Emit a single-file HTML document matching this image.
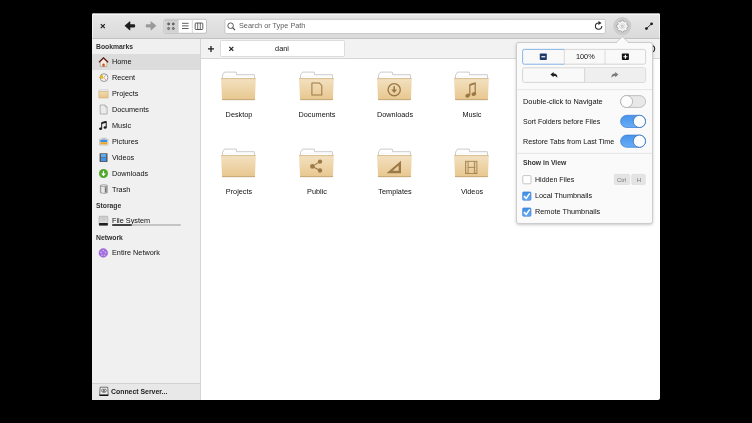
<!DOCTYPE html>
<html><head><meta charset="utf-8">
<style>
*{margin:0;padding:0;box-sizing:border-box}
html,body{width:752px;height:423px;background:#000;overflow:hidden;font-family:"Liberation Sans",sans-serif;color:#333}
.a{position:absolute}
#win{position:absolute;left:92px;top:13px;width:568px;height:387px;background:#fff;border-radius:3px 3px 2px 2px;overflow:hidden}
#hb{left:0;top:0;width:568px;height:26px;background:linear-gradient(#e8e8e8,#dadada);border-bottom:1px solid #c2c2c2;box-shadow:inset 0 1px 0 #a4a4a4,inset 0 2px 0 #f9f9f9,inset 1px 0 0 #f0f0f0,inset -1px 0 0 #f0f0f0}
#side{left:0;top:26px;width:109px;height:361px;background:#f0f0f0;border-right:1px solid #d4d4d4}
#tabs{left:109px;top:26px;width:459px;height:20px;background:#f2f2f2;border-bottom:1px solid #d6d6d6}
.t{will-change:transform;position:absolute;font-size:7.3px;line-height:8px;white-space:nowrap;color:#111}
.h{font-weight:bold;color:#333;font-size:6.8px}
.lbl{will-change:transform;position:absolute;font-size:7.3px;line-height:8px;width:70px;text-align:center;color:#111}
svg{position:absolute;overflow:visible}
</style></head><body>
<svg width="0" height="0" style="position:absolute">
<defs>
<linearGradient id="fg" x1="0" y1="0" x2="0" y2="1">
<stop offset="0" stop-color="#f3e1c1"/><stop offset="1" stop-color="#e8c78f"/>
</linearGradient>
<symbol id="folder" viewBox="0 0 46 36">
<path d="M6.5,10.8 L6.5,7.2 L8.5,4.1 L20.2,4.1 L20.6,6.7 L38.3,6.7 L38.6,10.8 Z" fill="#fff" stroke="#bababa" stroke-width="0.75" stroke-linejoin="miter"/>
<path d="M7.5,8.2 L37.6,8.2" stroke="#f2f2f2" stroke-width="0.6"/>
<path d="M5,10.3 L39.8,10.3 L38.9,31.9 L6.1,31.9 Z" fill="url(#fg)"/>
<path d="M5.1,10.6 L39.7,10.6" stroke="#d2b07a" stroke-width="0.7"/>
<path d="M6.1,31.5 L38.9,31.5" stroke="#c4a066" stroke-width="0.9"/>
<path d="M6.8,32.3 L38.2,32.3" stroke="#e6e0d6" stroke-width="0.6"/>
</symbol>
</defs>
</svg>

<div id="win">
  <div id="hb" class="a"></div>
  <div id="side" class="a"></div>
  <div id="tabs" class="a"></div>
</div>

<!-- headerbar -->
<svg style="left:0;top:0" width="752" height="423">
  <!-- close x -->
  <path d="M100.8,24.2 L104.8,28.2 M104.8,24.2 L100.8,28.2" stroke="#222" stroke-width="1.2"/>
  <!-- back arrow -->
  <path d="M124.5,25.8 L129.6,21.4 Q130.3,21 130.3,21.9 L130.3,24.2 L134.3,24.2 Q135.2,24.2 135.2,25.8 Q135.2,27.4 134.3,27.4 L130.3,27.4 L130.3,29.7 Q130.3,30.6 129.6,30.2 Z" fill="#1e1e1e"/>
  <!-- forward arrow -->
  <path d="M156.4,25.8 L151.3,21.4 Q150.6,21 150.6,21.9 L150.6,24.2 L146.6,24.2 Q145.7,24.2 145.7,25.8 Q145.7,27.4 146.6,27.4 L150.6,27.4 L150.6,29.7 Q150.6,30.6 151.3,30.2 Z" fill="#9a9a9a"/>
  <!-- view switcher -->
  <rect x="164" y="19.3" width="42.5" height="14" rx="1.5" fill="#fff" stroke="#b4b4b4" stroke-width="0.8"/>
  <rect x="164.4" y="19.7" width="13.8" height="13.2" fill="#d2d2d2"/>
  <path d="M165,20.3 H178" stroke="#c2c2c2" stroke-width="0.7"/>
  <path d="M178.2,19.5 V33.1 M192.3,19.5 V33.1" stroke="#cccccc" stroke-width="0.8"/>
  <circle cx="168.6" cy="23.9" r="1" fill="#777" stroke="#333" stroke-width="0.6"/>
  <circle cx="173.3" cy="23.9" r="1" fill="#777" stroke="#333" stroke-width="0.6"/>
  <circle cx="168.6" cy="28.5" r="1" fill="#999" stroke="#333" stroke-width="0.6"/>
  <circle cx="173.3" cy="28.5" r="1" fill="#999" stroke="#333" stroke-width="0.6"/>
  <path d="M182,23.3 H188.6 M182,25.9 H188.6 M182,28.5 H188.6" stroke="#333" stroke-width="0.8"/>
  <rect x="195.2" y="23" width="7.6" height="6.5" rx="0.8" fill="none" stroke="#333" stroke-width="0.8"/>
  <path d="M197.7,23 V29.5 M200.3,23 V29.5" stroke="#333" stroke-width="0.7"/>
  <!-- search -->
  <rect x="224.9" y="19.3" width="380.5" height="14.3" rx="1.5" fill="#fff" stroke="#bfbfbf" stroke-width="0.8"/>
  <circle cx="230.6" cy="25.7" r="2.8" fill="none" stroke="#444" stroke-width="0.9"/>
  <path d="M232.6,27.7 L235,30.1" stroke="#444" stroke-width="1.1"/>
  <!-- reload -->
  <path d="M598.6,22.9 A3.2,3.2 0 1 0 601.8,26.1" fill="none" stroke="#2a2a2a" stroke-width="1.05"/>
  <path d="M598.4,20.9 L601.6,22.9 L598.4,24.9 Z" fill="#2a2a2a"/>
  <!-- gear button -->
  <circle cx="622.3" cy="26.1" r="8.6" fill="#cdcdcd" stroke="#c2c2c2" stroke-width="0.6"/>
  <path d="M627.16,25.06 L628.33,25.26 L628.33,27.14 L627.16,27.34 L626.58,28.76 L627.25,29.73 L625.93,31.05 L624.96,30.38 L623.54,30.96 L623.34,32.13 L621.46,32.13 L621.26,30.96 L619.84,30.38 L618.87,31.05 L617.55,29.73 L618.22,28.76 L617.64,27.34 L616.47,27.14 L616.47,25.26 L617.64,25.06 L618.22,23.64 L617.55,22.67 L618.87,21.35 L619.84,22.02 L621.26,21.44 L621.46,20.27 L623.34,20.27 L623.54,21.44 L624.96,22.02 L625.93,21.35 L627.25,22.67 L626.58,23.64 Z" fill="#f6f6f6" stroke="#8c8c8c" stroke-width="0.6" stroke-linejoin="miter"/>
  <circle cx="622.4" cy="26.2" r="2.7" fill="none" stroke="#cfcfcf" stroke-width="0.6"/>
  <ellipse cx="622.4" cy="26.3" rx="0.9" ry="1.3" fill="none" stroke="#8f8f8f" stroke-width="0.6"/>
  <!-- expand -->
  <path d="M646.6,28.4 L651.4,24" stroke="#222" stroke-width="0.9"/>
  <circle cx="646.4" cy="28.6" r="1.4" fill="#1a1a1a"/>
  <circle cx="651.6" cy="23.8" r="1.4" fill="#1a1a1a"/>
</svg>

<div class="t" style="left:238.5px;top:22.4px;color:#606060">Search or Type Path</div>
<!-- tab bar -->
<div class="a" style="left:220.3px;top:39.8px;width:124.7px;height:17.6px;background:#fff;border:1px solid #dcdcdc;border-radius:1.5px"></div>
<svg style="left:0;top:0" width="752" height="423">
  <path d="M208,48.9 H214 M211,45.9 V51.9" stroke="#1e1e1e" stroke-width="1.3"/>
  <path d="M229.3,46.9 L233.3,50.9 M233.3,46.9 L229.3,50.9" stroke="#222" stroke-width="1.2"/>
</svg>
<div class="t" style="left:262px;top:45px;width:40px;text-align:center">dani</div>

<!-- sidebar text (page coords) -->
<div class="a" style="left:92px;top:54px;width:108px;height:16px;background:#dcdcdc"></div>
<div class="t h" style="left:96px;top:42.5px">Bookmarks</div>
<div class="t" style="left:112px;top:58px">Home</div>
<div class="t" style="left:112px;top:74px">Recent</div>
<div class="t" style="left:112px;top:90px">Projects</div>
<div class="t" style="left:112px;top:106px">Documents</div>
<div class="t" style="left:112px;top:122px">Music</div>
<div class="t" style="left:112px;top:138px">Pictures</div>
<div class="t" style="left:112px;top:154px">Videos</div>
<div class="t" style="left:112px;top:170px">Downloads</div>
<div class="t" style="left:112px;top:186px">Trash</div>
<div class="t h" style="left:96px;top:202px">Storage</div>
<div class="t" style="left:112px;top:217px">File System</div>
<div class="a" style="left:111.5px;top:224.2px;width:69.5px;height:1.4px;background:#c4c4c4;border-radius:1px"></div>
<div class="a" style="left:111.5px;top:224.2px;width:20px;height:1.4px;background:#444;border-radius:1px"></div>
<div class="t h" style="left:96px;top:234px">Network</div>
<div class="t" style="left:112px;top:249.3px">Entire Network</div>

<!-- sidebar bottom -->
<div class="a" style="left:92px;top:383px;width:108px;height:17px;background:#e8e8e8;border-top:1px solid #d2d2d2"></div>
<div class="t" style="left:110.5px;top:388px;color:#222;font-size:6.9px;font-weight:bold">Connect Server...</div>

<!-- folders -->
<svg style="left:216px;top:68px" width="46" height="36"><use href="#folder"/></svg>
<svg style="left:294px;top:68px" width="46" height="36"><use href="#folder"/></svg>
<svg style="left:372px;top:68px" width="46" height="36"><use href="#folder"/></svg>
<svg style="left:449px;top:68px" width="46" height="36"><use href="#folder"/></svg>
<svg style="left:216px;top:145px" width="46" height="36"><use href="#folder"/></svg>
<svg style="left:294px;top:145px" width="46" height="36"><use href="#folder"/></svg>
<svg style="left:372px;top:145px" width="46" height="36"><use href="#folder"/></svg>
<svg style="left:449px;top:145px" width="46" height="36"><use href="#folder"/></svg>

<!-- sidebar icons -->
<svg style="left:0;top:0" width="752" height="423">
  <!-- home -->
  <path d="M100.3,61.8 L100.3,66.6 L106.8,66.6 L106.8,61.8 L103.55,58.8 Z" fill="#f6ece2" stroke="#a77d66" stroke-width="0.5"/>
  <path d="M105.6,57.9 H106.6 V60.6 H105.6 Z" fill="#e9d9c4"/>
  <path d="M99,62.3 L103.5,57.9 L108.1,62.3" fill="none" stroke="#5a1818" stroke-width="1.25" stroke-linejoin="miter"/>
  <path d="M102.4,66.6 V64.6 A1.15,1.15 0 0 1 104.7,64.6 V66.6 Z" fill="#c2571f"/>
  <!-- recent -->
  <circle cx="104" cy="77.6" r="3.9" fill="#f8f8f8" stroke="#7c7c7c" stroke-width="0.8"/>
  <path d="M104,77.6 L105.9,80" stroke="#d04040" stroke-width="0.45"/>
  <path d="M104,77.6 L105.5,75.2" stroke="#555" stroke-width="0.45"/>
  <path d="M98.9,77.4 L102.6,74.3 L103.4,79.2 Z" fill="#e9b81c"/>
  <!-- projects folder -->
  <rect x="99" y="89.6" width="9" height="2" fill="#e6e6ea" stroke="#c8c8c8" stroke-width="0.4"/>
  <rect x="98.9" y="91.3" width="9.2" height="6.7" fill="url(#pf)" stroke="#c9a873" stroke-width="0.5"/>
  <defs><linearGradient id="pf" x1="0" y1="0" x2="0" y2="1"><stop offset="0" stop-color="#f2dcae"/><stop offset="1" stop-color="#e5c388"/></linearGradient></defs>
  <!-- documents -->
  <path d="M100.2,105 L105.1,105 L107.1,107.1 L107.1,114 L100.2,114 Z" fill="#ebebeb" stroke="#8c8c8c" stroke-width="0.6"/>
  <path d="M105.1,105 V107.1 H107.1" fill="none" stroke="#9a9a9a" stroke-width="0.5"/>
  <!-- music -->
  <path d="M101.7,128.6 V122.5 L106.2,121.4 V127.4" fill="none" stroke="#1a1a1a" stroke-width="1"/>
  <ellipse cx="100.6" cy="128.7" rx="1.5" ry="1.2" fill="#1a1a1a"/>
  <ellipse cx="105.1" cy="127.5" rx="1.5" ry="1.2" fill="#1a1a1a"/>
  <path d="M101.7,123.3 L106.2,122.2" stroke="#1a1a1a" stroke-width="1.3"/>
  <!-- pictures -->
  <rect x="99.5" y="139" width="8.5" height="6.1" rx="0.5" fill="#f0f0f0" stroke="#a0a0a0" stroke-width="0.5"/>
  <rect x="100.3" y="139.7" width="6.9" height="2.6" fill="#3d8fe0"/>
  <rect x="100.3" y="142.3" width="6.9" height="2.1" fill="#f2a51c"/>
  <path d="M102.2,137.6 L103.8,139 L105.4,137.6" fill="none" stroke="#777" stroke-width="0.5"/>
  <!-- videos -->
  <rect x="99.6" y="153.2" width="7.9" height="8.8" rx="0.4" fill="#5e4f47"/>
  <rect x="100.9" y="153.9" width="5.3" height="3.5" fill="#58acf4"/>
  <rect x="100.9" y="157.8" width="5.3" height="3.5" fill="#3f95ea"/>
  <!-- downloads -->
  <circle cx="103.5" cy="173.5" r="4.5" fill="#4fa82a"/>
  <path d="M103.5,170.9 V175.4" stroke="#fff" stroke-width="1.2"/>
  <path d="M101.1,173.6 L103.5,176.3 L105.9,173.6 Z" fill="#fff"/>
  <!-- trash -->
  <defs><linearGradient id="tg" x1="0" y1="0" x2="1" y2="0"><stop offset="0" stop-color="#bdbdbd"/><stop offset="0.35" stop-color="#f4f4f4"/><stop offset="1" stop-color="#9a9a9a"/></linearGradient></defs>
  <path d="M100.4,185.6 H107.2 V192.8 Q103.8,194 100.4,192.8 Z" fill="url(#tg)" stroke="#6e6e6e" stroke-width="0.55"/>
  <ellipse cx="103.8" cy="185.6" rx="3.4" ry="0.9" fill="#e6e6e6" stroke="#6e6e6e" stroke-width="0.5"/>
  <path d="M105.6,187.4 V192" stroke="#666" stroke-width="0.9"/>
  <!-- file system -->
  <defs><linearGradient id="fsg" x1="0" y1="0" x2="0" y2="1"><stop offset="0" stop-color="#c8c8c8"/><stop offset="1" stop-color="#e8e8e8"/></linearGradient></defs>
  <rect x="99" y="216.2" width="8.8" height="9.3" rx="0.9" fill="url(#fsg)" stroke="#9c9c9c" stroke-width="0.5"/>
  <rect x="99" y="222.9" width="8.8" height="2.6" rx="0.6" fill="#1e1e1e"/>
  <path d="M101.8,220.6 Q103.4,218.2 105.2,220" fill="none" stroke="#a8a8a8" stroke-width="0.5"/>
  <!-- entire network -->
  <circle cx="103.3" cy="252.9" r="4.4" fill="#a26ddf" stroke="#8a55c8" stroke-width="0.4"/>
  <g fill="#e8d8fa"><circle cx="103.3" cy="250.4" r="0.55"/><circle cx="101" cy="252.4" r="0.55"/><circle cx="105.6" cy="252.4" r="0.55"/><circle cx="102" cy="255.2" r="0.55"/><circle cx="104.7" cy="255.2" r="0.55"/></g>
  <path d="M103.3,250.4 L101,252.4 L102,255.2 L104.7,255.2 L105.6,252.4 Z" fill="none" stroke="#c9a8f0" stroke-width="0.35"/>
  <!-- connect server -->
  <path d="M100.2,387.2 H107.7 L108.2,395.3 H99.6 Z" fill="#f0f0f0" stroke="#3c3c3c" stroke-width="0.7" stroke-linejoin="round"/>
  <rect x="99.5" y="394.4" width="8.8" height="1.5" rx="0.4" fill="#111"/>
  <circle cx="102.9" cy="390.6" r="1.5" fill="none" stroke="#444" stroke-width="0.6"/>
  <circle cx="104.9" cy="390.6" r="1.5" fill="none" stroke="#444" stroke-width="0.6"/>
  <circle cx="103.9" cy="391.6" r="1.2" fill="none" stroke="#666" stroke-width="0.5"/>
</svg>

<!-- folder emblems -->
<svg style="left:0;top:0" width="752" height="423">
<g fill="none" stroke="#9c7a47" stroke-linejoin="round">
  <path d="M311.9,82.9 L319.2,82.9 L321.8,85.5 L321.8,95 L311.9,95 Z" stroke-width="1.05"/>
  <circle cx="394.2" cy="89.7" r="6.1" stroke-width="1.4"/>
</g>
<g fill="#9c7a47">
  <path d="M393.4,86.3 H395 V89.6 H397.2 L394.2,93 L391.2,89.6 H393.4 Z"/>
  <g transform="translate(-1 0)">
  <path d="M470.2,84.2 Q473.5,82.6 476.8,82.2 L476.8,93.6 L475.6,93.6 L475.6,84.6 Q473.2,85 471.4,85.9 L471.4,95.4 L470.2,95.4 Z"/>
  <ellipse cx="468.7" cy="95.6" rx="2.4" ry="1.9" transform="rotate(-20 468.7 95.6)"/>
  <ellipse cx="474.9" cy="94" rx="2.4" ry="1.9" transform="rotate(-20 474.9 94)"/>
  </g>
  <circle cx="320" cy="161.6" r="2.2"/>
  <circle cx="312.4" cy="166.4" r="2.3"/>
  <circle cx="320" cy="170.5" r="2.2"/>
  <path d="M386.5,173.2 L401,160.8 L401,173.2 Z M392.6,170.8 L398.6,170.8 L398.6,165.6 Z" fill-rule="evenodd"/>
</g>
<path d="M320,161.6 L312.4,166.4 L320,170.5" fill="none" stroke="#9c7a47" stroke-width="1.1"/>
<g transform="translate(-1 0)">
<g fill="none" stroke="#a0804f" stroke-width="0.9">
  <rect x="466.6" y="161.3" width="11.3" height="12.3"/>
  <path d="M469.1,161.3 V173.6 M475.4,161.3 V173.6 M469.1,167.4 H475.4"/>
</g>
<g fill="#a0804f">
  <circle cx="467.8" cy="163" r="0.45"/><circle cx="467.8" cy="165.4" r="0.45"/><circle cx="467.8" cy="167.8" r="0.45"/><circle cx="467.8" cy="170.2" r="0.45"/><circle cx="467.8" cy="172.4" r="0.45"/>
  <circle cx="476.7" cy="163" r="0.45"/><circle cx="476.7" cy="165.4" r="0.45"/><circle cx="476.7" cy="167.8" r="0.45"/><circle cx="476.7" cy="170.2" r="0.45"/><circle cx="476.7" cy="172.4" r="0.45"/>
</g>
</g>
</svg>

<!-- tab bar right partial icon -->
<svg style="left:0;top:0" width="752" height="423">
  <path d="M652.6,45.4 A3.6,3.6 0 0 1 652.6,52" fill="none" stroke="#222" stroke-width="1.1"/>
</svg>
<!-- content labels -->
<div class="lbl" style="left:204px;top:110.5px">Desktop</div>
<div class="lbl" style="left:282px;top:110.5px">Documents</div>
<div class="lbl" style="left:360px;top:110.5px">Downloads</div>
<div class="lbl" style="left:437px;top:110.5px">Music</div>
<div class="lbl" style="left:204px;top:187.5px">Projects</div>
<div class="lbl" style="left:282px;top:187.5px">Public</div>
<div class="lbl" style="left:360px;top:187.5px">Templates</div>
<div class="lbl" style="left:437px;top:187.5px">Videos</div>

<!-- POPOVER -->
<div class="a" style="left:515.6px;top:42.3px;width:137px;height:182px;background:#fafafa;border:1px solid #cdcdcd;border-radius:3px;box-shadow:0 1px 3px rgba(0,0,0,.22)"></div>
<svg style="left:0;top:0" width="752" height="423">
  <path d="M615.6,43.6 L622.4,36.9 L629.2,43.6 Z" fill="#fafafa"/>
  <path d="M615.8,43 L622.4,36.6 L629,43" fill="none" stroke="#c4c4c4" stroke-width="0.8"/>
  <!-- zoom row -->
  <rect x="522.6" y="49.4" width="123" height="14.8" rx="1.8" fill="#f9f9f9" stroke="#cdcdcd" stroke-width="0.8"/>
  <path d="M605,49.6 V64" stroke="#d4d4d4" stroke-width="0.8"/>
  <path d="M564.3,49.4 H524.4 Q522.6,49.4 522.6,51.2 V62.4 Q522.6,64.2 524.4,64.2 H564.3" fill="#f9f9f9" stroke="#7fb1ea" stroke-width="0.9"/>
  <path d="M564.3,49.6 V64" stroke="#d0d0d0" stroke-width="0.8"/>
  <rect x="539.8" y="53.4" width="7" height="6.7" rx="0.8" fill="#1d3b66"/>
  <path d="M541.4,56.75 H545.2" stroke="#fff" stroke-width="1.2"/>
  <rect x="621.9" y="53.4" width="7" height="6.7" rx="0.8" fill="#111"/>
  <path d="M623.4,56.75 H627.4 M625.4,54.8 V58.7" stroke="#fff" stroke-width="1.2"/>
  <!-- undo row -->
  <rect x="522.6" y="67.8" width="123" height="14.6" rx="1.8" fill="#f9f9f9" stroke="#cdcdcd" stroke-width="0.8"/>
  <path d="M584.9,68.2 H643.8 Q645.2,68.2 645.2,69.6 V80.6 Q645.2,82 643.8,82 H584.9 Z" fill="#efefef"/>
  <path d="M584.6,68 V82.2" stroke="#cdcdcd" stroke-width="0.8"/>
  <path d="M550.4,74.6 L553.6,71.9 L553.6,73.6 Q557.4,73.6 557.4,77.8 Q556,75.8 553.6,75.8 L553.6,77.3 Z" fill="#1e1e1e"/>
  <path d="M618.4,74.6 L615.2,71.9 L615.2,73.6 Q611.4,73.6 611.4,77.8 Q612.8,75.8 615.2,75.8 L615.2,77.3 Z" fill="#7a7a7a"/>
  <!-- separators -->
  <path d="M516.5,89.6 H652" stroke="#e0e0e0" stroke-width="0.8"/>
  <path d="M516.5,153.4 H652" stroke="#e0e0e0" stroke-width="0.8"/>
  <!-- switches -->
  <rect x="620.6" y="95.6" width="25" height="11.8" rx="5.9" fill="#e8e8e8" stroke="#b4b4b4" stroke-width="0.8"/>
  <circle cx="626.6" cy="101.5" r="6" fill="#fdfdfd" stroke="#a8a8a8" stroke-width="0.8"/>
  <defs><linearGradient id="cb" x1="0" y1="0" x2="0" y2="1"><stop offset="0" stop-color="#3f8be6"/><stop offset="1" stop-color="#66abf6"/></linearGradient><linearGradient id="sw" x1="0" y1="0" x2="0" y2="1"><stop offset="0" stop-color="#4893ea"/><stop offset="1" stop-color="#68adf7"/></linearGradient></defs>
  <rect x="620.6" y="115.3" width="25" height="12.2" rx="6.1" fill="url(#sw)" stroke="#3a7bd0" stroke-width="0.7"/>
  <circle cx="639.4" cy="121.4" r="6.1" fill="#fdfdfd" stroke="#2f6fc0" stroke-width="0.8"/>
  <rect x="620.6" y="135.1" width="25" height="12.2" rx="6.1" fill="url(#sw)" stroke="#3a7bd0" stroke-width="0.7"/>
  <circle cx="639.4" cy="141.2" r="6.1" fill="#fdfdfd" stroke="#2f6fc0" stroke-width="0.8"/>
  <!-- checkboxes -->
  <rect x="522.8" y="175.6" width="8.2" height="8.2" rx="1" fill="#fff" stroke="#b8b8b8" stroke-width="0.8"/>
  <rect x="522.6" y="191.9" width="8.4" height="8.4" rx="1.1" fill="url(#cb)" stroke="#3a7ccc" stroke-width="0.6"/>
  <path d="M523.9,196.2 L526.2,198.4 L529.8,193.4" fill="none" stroke="#fff" stroke-width="1.6"/>
  <rect x="522.6" y="207.9" width="8.4" height="8.4" rx="1.1" fill="url(#cb)" stroke="#3a7ccc" stroke-width="0.6"/>
  <path d="M523.9,212.2 L526.2,214.4 L529.8,209.4" fill="none" stroke="#fff" stroke-width="1.6"/>
  <!-- keys -->
  <rect x="614.3" y="174.3" width="15.4" height="10.2" rx="1.2" fill="#e4e4e4" stroke="#dadada" stroke-width="0.6"/>
  <rect x="631.7" y="174.3" width="13.6" height="10.2" rx="1.2" fill="#e4e4e4" stroke="#dadada" stroke-width="0.6"/>
</svg>
<div class="t" style="left:575.5px;top:52.5px">100%</div>
<div class="t" style="left:523px;top:97.5px;font-size:7.4px">Double-click to Navigate</div>
<div class="t" style="left:523px;top:117.5px;font-size:7.05px">Sort Folders before Files</div>
<div class="t" style="left:523px;top:137.5px;font-size:7.15px">Restore Tabs from Last Time</div>
<div class="t h" style="left:523px;top:159px">Show in View</div>
<div class="t" style="left:535px;top:175.5px;font-size:7.05px">Hidden Files</div>
<div class="t" style="left:535px;top:192px">Local Thumbnails</div>
<div class="t" style="left:535px;top:208px">Remote Thumbnails</div>
<div class="t" style="left:614.3px;top:175.5px;width:15.4px;text-align:center;font-size:6px;color:#777">Ctrl</div>
<div class="t" style="left:631.7px;top:175.5px;width:13.6px;text-align:center;font-size:6px;color:#777">H</div>
</body></html>
